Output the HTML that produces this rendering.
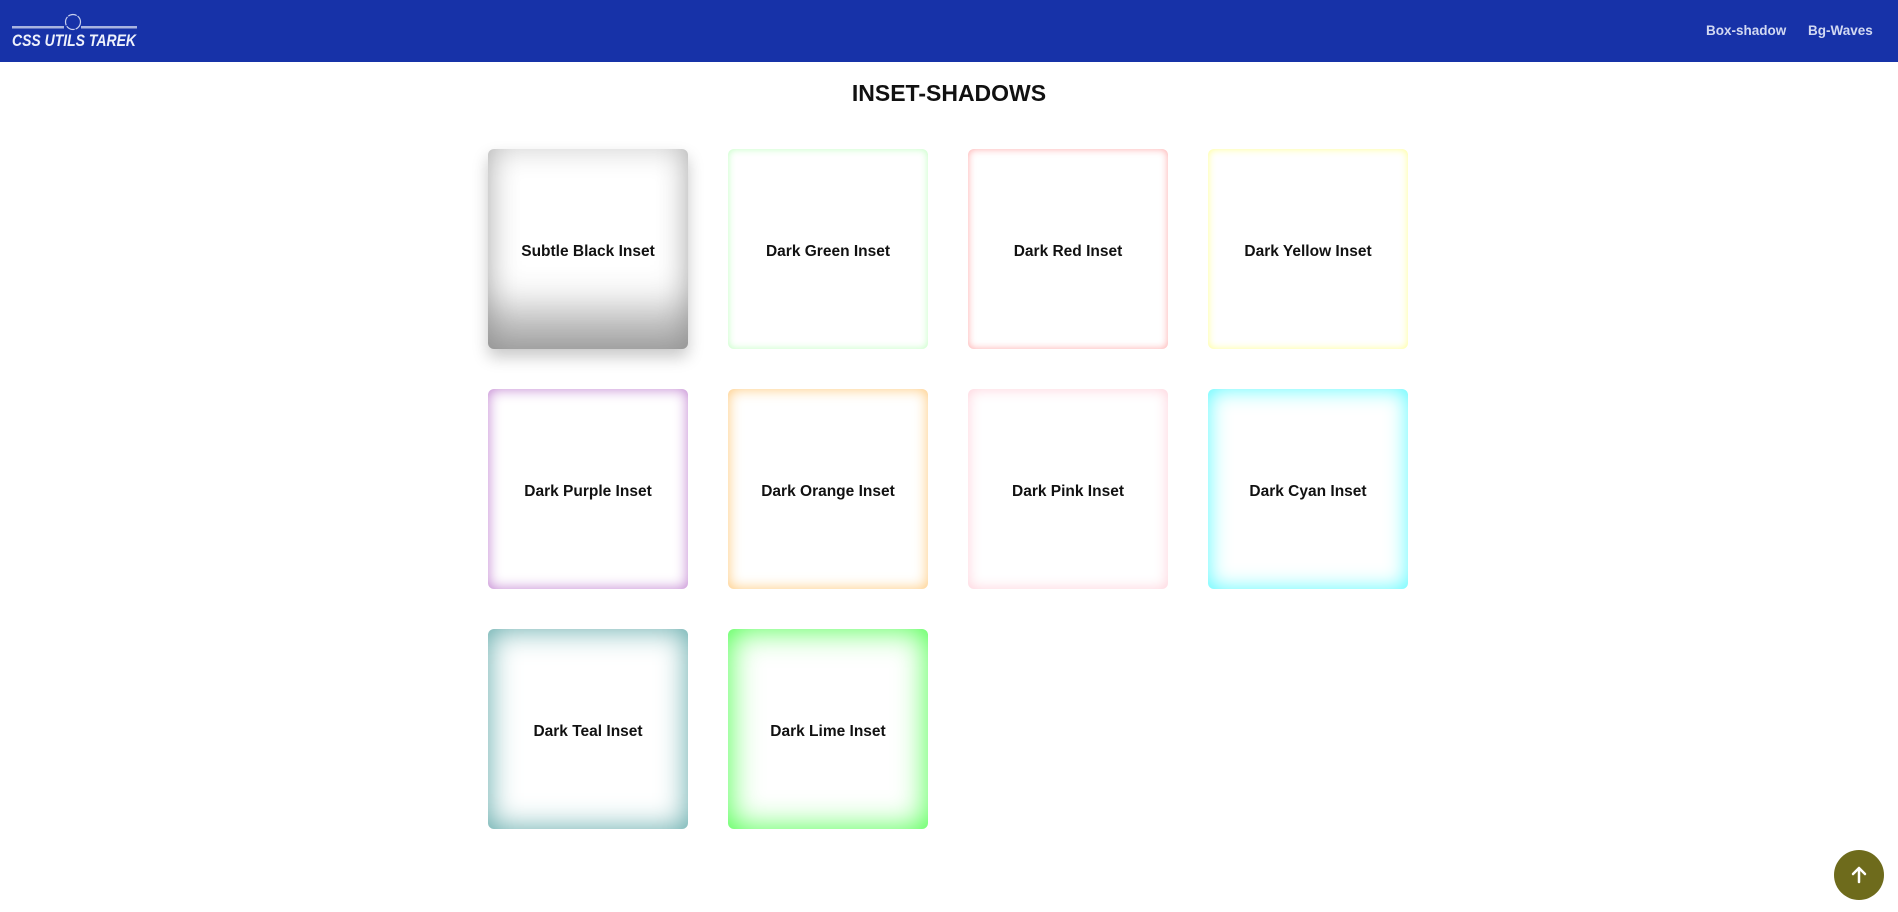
<!DOCTYPE html>
<html><head><meta charset="utf-8"><style>
*{margin:0;padding:0;box-sizing:border-box}
body{width:1898px;height:912px;overflow:hidden;background:#fff;font-family:"Liberation Sans",sans-serif;position:relative}
nav{height:62px;background:#1732a8;position:relative}
.logo{position:absolute;left:12px;top:12px;width:125px;height:40px}
.links{position:absolute;top:23px;color:#d2d9f2;font-size:13.5px;font-weight:bold}
h1{position:absolute;top:80px;left:0;width:100%;text-align:center;font-size:23px;font-weight:bold;color:#111}
.c{position:absolute;width:200px;height:200px;border-radius:6px;display:flex;align-items:center;justify-content:center;font-weight:bold;font-size:15.5px;color:#111;background:#fff;padding-top:5px}
.up{position:absolute;left:1834px;top:850px;width:50px;height:50px;border-radius:50%;background:#6e6b1c}
</style></head><body>
<nav>
<svg class="logo" viewBox="0 0 125 40">
<rect x="0" y="14" width="52" height="2.5" fill="#a9b4e0"/>
<rect x="69" y="14" width="56" height="2.5" fill="#a9b4e0"/>
<circle cx="61" cy="10" r="7.5" fill="none" stroke="#c8d0ee" stroke-width="1.2" stroke-dasharray="9 1"/>
<text x="0" y="34" font-family="Liberation Sans" font-size="17" font-weight="bold" font-style="italic" fill="#eef1fb" textLength="124" lengthAdjust="spacingAndGlyphs">CSS UTILS TAREK</text>
</svg>
<span class="links" style="left:1706px">Box-shadow</span>
<span class="links" style="left:1808px">Bg-Waves</span>
</nav>
<h1>INSET-SHADOWS</h1>
<div class="c" style="left:488px;top:149px;box-shadow:inset 0 -50px 40px -10px rgba(0,0,0,.3),inset 0 0 30px rgba(0,0,0,.2),0 8px 16px rgba(0,0,0,.22)">Subtle Black Inset</div>
<div class="c" style="left:728px;top:149px;box-shadow:inset 0 0 8px #c0ffc0">Dark Green Inset</div>
<div class="c" style="left:968px;top:149px;box-shadow:inset 0 0 8px #ffaaaa">Dark Red Inset</div>
<div class="c" style="left:1208px;top:149px;box-shadow:inset 0 0 8px #ffff90">Dark Yellow Inset</div>
<div class="c" style="left:488px;top:389px;box-shadow:inset 0 0 14px #c080d0">Dark Purple Inset</div>
<div class="c" style="left:728px;top:389px;box-shadow:inset 0 0 14px #ffc878">Dark Orange Inset</div>
<div class="c" style="left:968px;top:389px;box-shadow:inset 0 0 14px #ffd0da">Dark Pink Inset</div>
<div class="c" style="left:1208px;top:389px;box-shadow:inset 0 0 22px #55faff">Dark Cyan Inset</div>
<div class="c" style="left:488px;top:629px;box-shadow:inset 0 0 30px #5aa6a6">Dark Teal Inset</div>
<div class="c" style="left:728px;top:629px;box-shadow:inset 0 0 32px #44ff44">Dark Lime Inset</div>
<div class="up"><svg width="50" height="50" viewBox="0 0 50 50"><path d="M25 32V18M19 24l6-6 6 6" stroke="#fff" stroke-width="2.5" fill="none" stroke-linecap="round" stroke-linejoin="round"/></svg></div>
</body></html>
